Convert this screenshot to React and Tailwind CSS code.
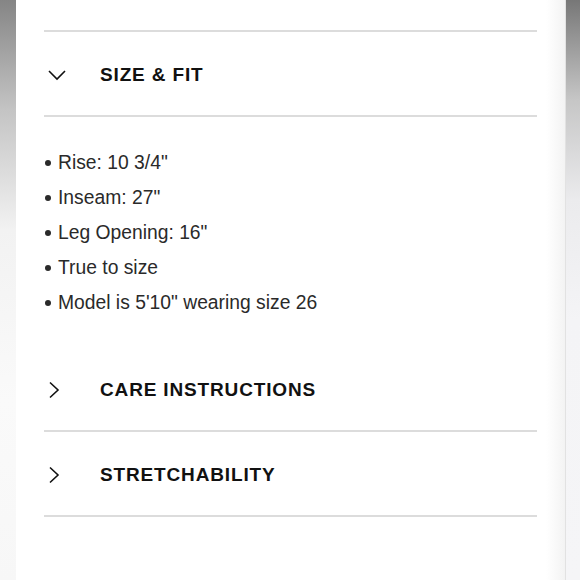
const bullets = [
  'Rise: 10 3/4"',
  'Inseam: 27"',
  'Leg Opening: 16"',
  "True to size",
  'Model is 5\'10" wearing size 26',
];

function ChevronDown() {
  return (
    <svg width="20" height="12" viewBox="0 0 20 12" fill="none" className="ml-[3px]">
      <path d="M2 2 L10 10 L18 2" stroke="#111" strokeWidth="1.6" />
    </svg>
  );
}

function ChevronRight() {
  return (
    <svg width="14" height="18" viewBox="0 0 14 18" fill="none" className="ml-[3px]">
      <path d="M3 1.5 L11 9 L3 16.5" stroke="#111" strokeWidth="1.6" />
    </svg>
  );
}

function Divider() {
  return <div className="h-[2px] bg-[#dcdcdc]" />;
}

function Row({ title, open }) {
  return (
    <div className="flex h-[83px] items-center pt-[2px]">
      <div className="w-[56px] flex items-center">{open ? <ChevronDown /> : <ChevronRight />}</div>
      <h3 className="text-[19px] font-bold tracking-[0.85px] text-[#111] leading-none">{title}</h3>
    </div>
  );
}

export default function App() {
  return (
    <div
      className="flex h-[580px] w-[580px] overflow-hidden bg-white"
      style={{ fontFamily: '"Liberation Sans", Arial, sans-serif' }}
    >
      <div className="w-[16px] shrink-0 bg-[linear-gradient(to_bottom,#858585,#c4c4c4_110px,#f2f2f2_230px,#fafafa_400px,#f7f7f7)]" />

      <div className="flex-1 px-[28px] pt-[30px] bg-[linear-gradient(to_right,#ffffff_530px,#f3f3f3)]">
        <Divider />
        <Row title="SIZE & FIT" open />
        <Divider />

        <ul className="pt-[28px] pb-[27px] text-[19.3px] leading-[35px] text-[#2a2a2a]">
          {bullets.map((b) => (
            <li key={b} className="flex items-center">
              <span className="ml-[1px] mr-[7px] inline-block h-[6px] w-[6px] rounded-full bg-[#2a2a2a]" />
              {b}
            </li>
          ))}
        </ul>

        <Row title="CARE INSTRUCTIONS" />
        <Divider />
        <Row title="STRETCHABILITY" />
        <Divider />
      </div>

      <div className="w-[15px] shrink-0 border-l border-[#e2e2e2] bg-[linear-gradient(to_bottom,#777777,#c6c6c6_100px,#ebebed_200px,#f4f4f6_320px,#f5f5f7)]" />
    </div>
  );
}
